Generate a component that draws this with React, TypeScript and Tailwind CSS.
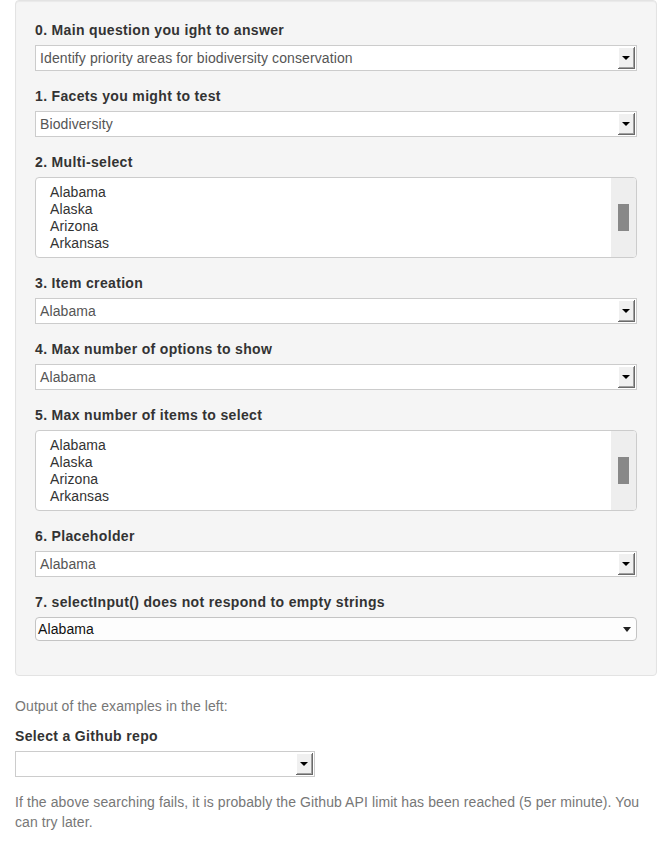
const states = ["Alabama", "Alaska", "Arizona", "Arkansas"];

function DropButton() {
  return (
    <div className="flex h-[22px] w-[17px] items-center justify-center bg-[#f0f0f0] border-r border-b border-[#6a6a6a] shadow-[inset_1px_1px_#ffffff,inset_-1px_-1px_#a0a0a0]">
      <div className="h-0 w-0 border-l-[4px] border-r-[4px] border-t-[4px] border-l-transparent border-r-transparent border-t-black" />
    </div>
  );
}

function ClassicSelect({ value, width }: { value: string; width?: string }) {
  return (
    <div className={`flex h-[26px] items-center justify-between border border-[#cccccc] bg-white pl-[4px] pr-[1px] ${width ?? "w-full"}`}>
      <span className="text-[#555555]">{value}</span>
      <DropButton />
    </div>
  );
}

function ListBox() {
  return (
    <div className="flex h-[81px] overflow-hidden rounded border border-[#cccccc] bg-white">
      <div className="flex-1 pl-[14px] pt-[6px] leading-[17px] text-[#333333]">
        {states.map((s) => (
          <div key={s}>{s}</div>
        ))}
      </div>
      <div className="flex w-[25px] items-start justify-center bg-[#eeeeee] pt-[26px]">
        <div className="h-[27px] w-[11px] bg-[#888888]" />
      </div>
    </div>
  );
}

function Field({ label, children }: { label: string; children: React.ReactNode }) {
  return (
    <div className="mb-[15px]">
      <label className="mb-[5px] block font-bold leading-5 tracking-[0.34px] text-[#333333]">{label}</label>
      {children}
    </div>
  );
}

export default function App() {
  return (
    <div className="min-h-screen bg-white px-[15px] text-[14px] leading-5 tracking-[0.1px] text-[#333333] font-['Liberation_Sans',Arial,sans-serif]">
      <div className="mb-5 rounded border border-[#e3e3e3] bg-[#f5f5f5] p-[19px] shadow-[inset_0_1px_1px_rgba(0,0,0,0.05)]">
        <Field label="0. Main question you ight to answer">
          <ClassicSelect value="Identify priority areas for biodiversity conservation" />
        </Field>
        <Field label="1. Facets you might to test">
          <ClassicSelect value="Biodiversity" />
        </Field>
        <Field label="2. Multi-select">
          <ListBox />
        </Field>
        <Field label="3. Item creation">
          <ClassicSelect value="Alabama" />
        </Field>
        <Field label="4. Max number of options to show">
          <ClassicSelect value="Alabama" />
        </Field>
        <Field label="5. Max number of items to select">
          <ListBox />
        </Field>
        <Field label="6. Placeholder">
          <ClassicSelect value="Alabama" />
        </Field>
        <Field label="7. selectInput() does not respond to empty strings">
          <div className="flex h-[24px] items-center justify-between rounded border border-[#c4c4c4] bg-[#fdfdfd] pl-[2px] pr-[5px]">
            <span className="text-[#111111]">Alabama</span>
            <div className="h-0 w-0 border-l-[4px] border-r-[4px] border-t-[5px] border-l-transparent border-r-transparent border-t-[#222222]" />
          </div>
        </Field>
      </div>

      <p className="mb-[10px] text-[#777777]">Output of the examples in the left:</p>
      <div className="mb-[15px]">
        <label className="mb-[5px] block font-bold leading-5 tracking-[0.34px] text-[#333333]">Select a Github repo</label>
        <ClassicSelect value="" width="w-[300px]" />
      </div>
      <p className="max-w-[630px] text-[#777777]">
        If the above searching fails, it is probably the Github API limit has been reached (5 per minute). You can try later.
      </p>
    </div>
  );
}
